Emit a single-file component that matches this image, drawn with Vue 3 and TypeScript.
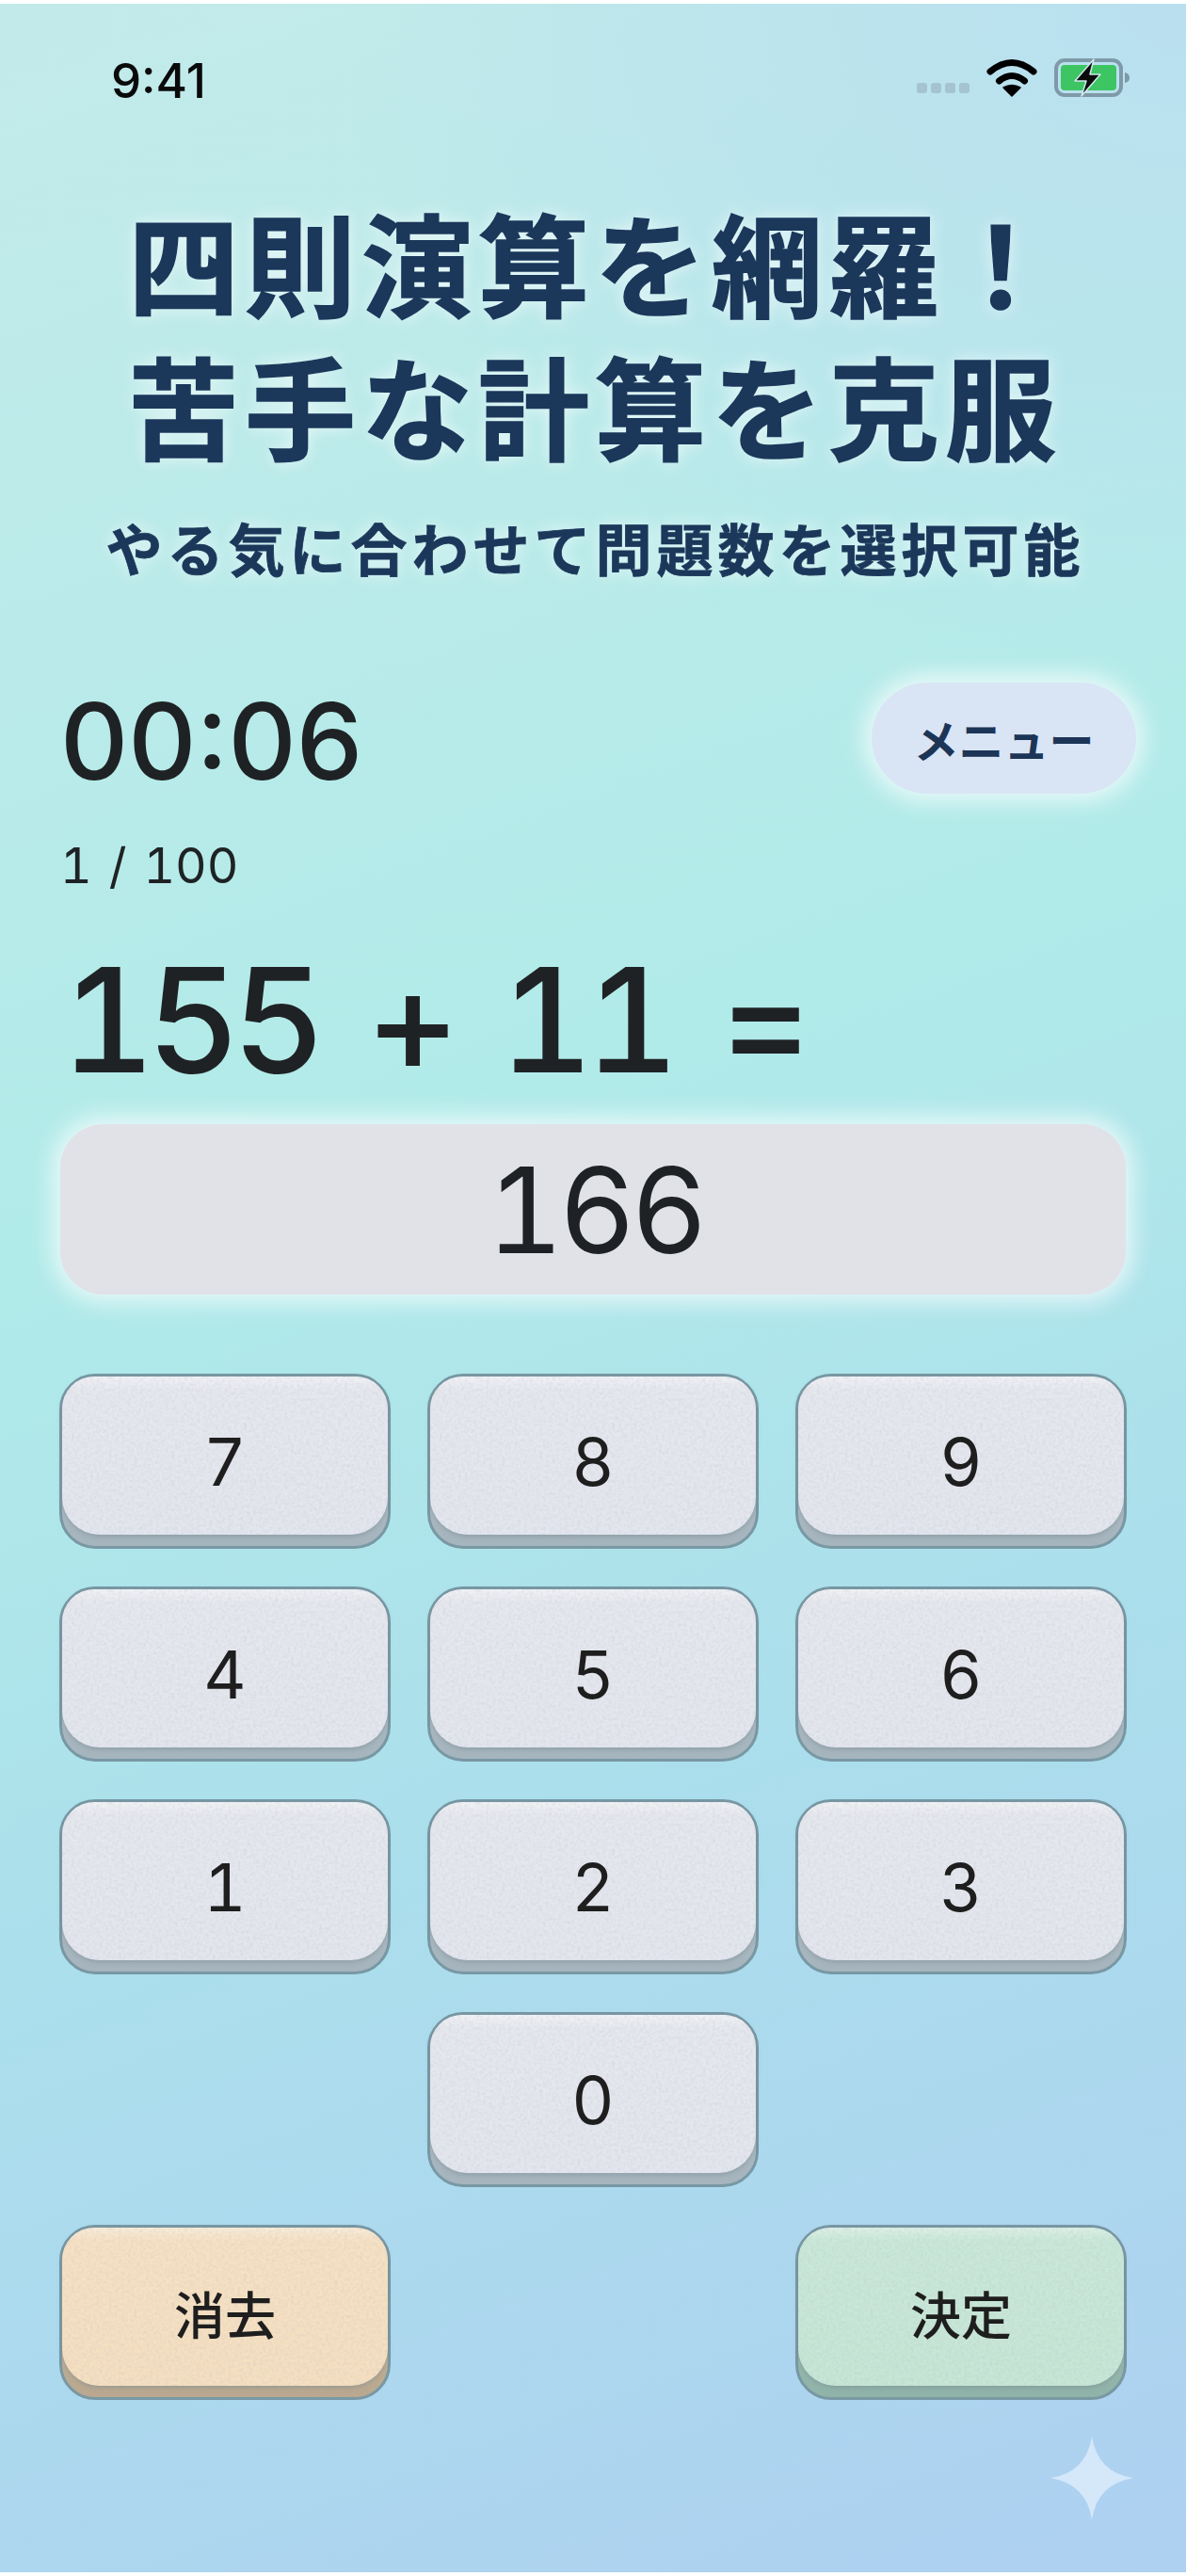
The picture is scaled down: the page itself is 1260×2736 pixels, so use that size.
<script setup lang="ts">
type Key = { label: string; tone: string; col: number };

const keys: Key[] = [
  { label: "7", tone: "plain", col: 1 },
  { label: "8", tone: "plain", col: 2 },
  { label: "9", tone: "plain", col: 3 },
  { label: "4", tone: "plain", col: 1 },
  { label: "5", tone: "plain", col: 2 },
  { label: "6", tone: "plain", col: 3 },
  { label: "1", tone: "plain", col: 1 },
  { label: "2", tone: "plain", col: 2 },
  { label: "3", tone: "plain", col: 3 },
  { label: "0", tone: "plain", col: 2 },
  { label: "消去", tone: "clear", col: 1 },
  { label: "決定", tone: "ok", col: 3 },
];
</script>

<template>
  <div class="screen">
    <header class="status">
      <span class="clock">9:41</span>
      <div class="status-icons">
        <div class="signal"><i></i><i></i><i></i><i></i></div>
        <svg class="wifi" width="54" height="41" viewBox="0 0 54 41">
          <path d="M4 14Q27 -5 50 14" fill="none" stroke="#000" stroke-width="7" stroke-linecap="round" />
          <path d="M13.500 24Q27 13 40.500 24" fill="none" stroke="#000" stroke-width="7" stroke-linecap="round" />
          <path d="M18 31Q27 26 36 31L27 40Z" fill="#000" stroke="#000" stroke-width="1.500" stroke-linejoin="round" />
        </svg>
        <svg class="battery" width="81" height="41" viewBox="0 0 81 41">
          <rect x="2" y="2" width="69" height="37" rx="9" fill="none" stroke="#7e9aa8" stroke-width="4" />
          <rect x="7" y="7" width="59" height="27" rx="4" fill="#3cc562" />
          <path d="M75 15Q80 16 80 20.500Q80 25 75 26Z" fill="#7e9aa8" />
          <path d="M42 1L22 24H34L29 40L49 17H38Z" fill="#0b0b0b" stroke="#cfe8ee" stroke-width="1.500" stroke-linejoin="round" />
        </svg>
      </div>
    </header>

    <section class="hero">
      <h1>四則演算を網羅！<br />苦手な計算を克服</h1>
      <p>やる気に合わせて問題数を選択可能</p>
    </section>

    <main class="game">
      <div class="top-row">
        <span class="timer">00:06</span>
        <button class="menu">メニュー</button>
      </div>
      <div class="progress">1 / 100</div>
      <div class="question">155 + 11 =</div>
      <div class="answer">166</div>

      <div class="pad">
        <button
          v-for="k in keys"
          :key="k.label"
          class="key"
          :class="k.tone"
          :style="{ gridColumn: k.col }"
        >
          <span class="face">
            <svg class="grain" width="100%" height="100%"><rect width="100%" height="100%" filter="url(#grain)" /></svg>
            <span class="label">{{ k.label }}</span>
          </span>
        </button>
      </div>
    </main>

    <svg class="sparkle" width="88" height="88" viewBox="0 0 88 88">
      <path d="M44 0Q50 38 88 44Q50 50 44 88Q38 50 0 44Q38 38 44 0Z" fill="#d5e8f9" />
    </svg>

    <svg width="0" height="0" class="defs">
      <filter id="grain" x="0" y="0" width="100%" height="100%">
        <feTurbulence type="fractalNoise" baseFrequency="0.3" numOctaves="3" seed="4" />
        <feColorMatrix values="0 0 0 0 0.45  0 0 0 0 0.45  0 0 0 0 0.5  0.6 0.6 0 0 -0.5" />
      </filter>
    </svg>
  </div>
</template>

<style>
html, body {
  margin: 0;
  background: #fff;
}
</style>

<style scoped>
.screen {
  position: relative;
  box-sizing: border-box;
  width: 1260px;
  height: 2736px;
  overflow: hidden;
  border-top: 4px solid #fff;
  border-bottom: 4px solid #fff;
  font-family: Inter, "Noto Sans CJK JP", sans-serif;
  font-variant-numeric: tabular-nums;
  color: #1f2224;
  background:
    radial-gradient(900px 700px at 100% 0%, rgba(185, 222, 240, 0.9), rgba(185, 222, 240, 0) 100%),
    linear-gradient(160deg, #c3eaea 0%, #b1ebe9 42%, #abdeec 68%, #aed0f1 100%);
}

.status {
  display: flex;
  justify-content: space-between;
  align-items: flex-start;
  height: 102px;
  padding: 58px 59px 0 118px;
}

.clock {
  font-size: 51px;
  line-height: 47px;
  font-weight: 500;
  font-variant-numeric: normal;
  color: #0a0a0a;
}

.status-icons {
  display: flex;
  align-items: flex-end;
  gap: 18px;
}

.signal {
  display: flex;
  gap: 4px;
  margin-bottom: 4px;
}

.signal i {
  width: 11px;
  height: 11px;
  border-radius: 3px;
  background: #a5c3d0;
}

.wifi,
.battery {
  display: block;
}

.hero {
  margin-top: 37px;
  text-align: center;
  color: #1b375a;
  font-family: "Noto Sans CJK JP", sans-serif;
  text-shadow: 0 0 18px rgba(255, 255, 255, 0.7);
}

.hero h1 {
  margin: 0;
  padding-left: 4px;
  font-size: 118px;
  line-height: 152px;
  font-weight: 700;
  letter-spacing: 6px;
  -webkit-text-stroke: 1.500px #1b375a;
}

.hero p {
  margin: 36px 0 0;
  padding-left: 5px;
  font-size: 60px;
  line-height: 80px;
  font-weight: 700;
  letter-spacing: 5px;
  -webkit-text-stroke: 0.800px #1b375a;
}

.game {
  padding: 0 64px;
}

.top-row {
  display: flex;
  justify-content: space-between;
  align-items: flex-start;
  margin-top: 104px;
  margin-right: -11px;
}

.timer {
  margin-top: 5px;
  font-size: 112px;
  line-height: 114px;
  font-weight: 450;
  font-variant-numeric: normal;
}

.menu {
  width: 281px;
  height: 118px;
  border: none;
  border-radius: 59px;
  background: #d9e5f5;
  color: #1c3556;
  font-family: "Noto Sans CJK JP", sans-serif;
  font-size: 48px;
  font-weight: 700;
  box-shadow: 0 0 24px 8px rgba(255, 255, 255, 0.7);
}

.progress {
  margin-top: 46px;
  font-size: 52px;
  line-height: 60px;
  word-spacing: 4px;
}

.question {
  margin-top: 53px;
  padding-left: 1px;
  font-size: 154px;
  line-height: 160px;
  font-weight: 450;
  letter-spacing: -9px;
  word-spacing: 19px;
}

.answer {
  display: flex;
  align-items: center;
  justify-content: center;
  height: 181px;
  margin-top: 31px;
  padding-left: 4px;
  border-radius: 46px;
  background: #e1e2e7;
  font-size: 126px;
  letter-spacing: -5px;
  box-shadow: 0 0 24px 8px rgba(255, 255, 255, 0.7);
}

.pad {
  display: grid;
  grid-template-columns: repeat(3, 352px);
  grid-auto-rows: 186px;
  column-gap: 39px;
  row-gap: 40px;
  margin-top: 84px;
  margin-left: -1px;
}

.key {
  display: block;
  box-sizing: border-box;
  padding: 0 0 12px;
  border: 3px solid #7898a4;
  border-radius: 38px;
  font: inherit;
  color: #1e1e1e;
  background: linear-gradient(#c2ccd2, #a5b4bd);
}

.face {
  position: relative;
  display: flex;
  align-items: center;
  justify-content: center;
  height: 100%;
  border-radius: 34px 34px 40px 40px;
  overflow: hidden;
  font-size: 70px;
  box-shadow: 0 2px 5px rgba(120, 135, 145, 0.5);
}

.label {
  position: relative;
  top: 6px;
}

.grain {
  position: absolute;
  inset: 0;
  opacity: 0.5;
}

.plain .face {
  background: linear-gradient(#f0f2f6 0, #e6e8ef 14px, #e3e6ee 100%);
}

.clear .key,
.clear {
  background: linear-gradient(#d8c7ac, #b9a88f);
}

.ok {
  background: linear-gradient(#afcfc4, #8fb3a8);
}

.clear .face {
  background: linear-gradient(#f8ecd8 0, #f6e1c4 14px, #f5dfc0 100%);
}

.ok .face {
  background: linear-gradient(#dcf0e6 0, #c9e8d9 14px, #c6e6d6 100%);
}

.clear .label,
.ok .label {
  font-family: "Noto Sans CJK JP", sans-serif;
  font-size: 54px;
  font-weight: 500;
}

.sparkle {
  position: absolute;
  left: 1116px;
  top: 2584px;
}

.defs {
  position: absolute;
}
</style>
